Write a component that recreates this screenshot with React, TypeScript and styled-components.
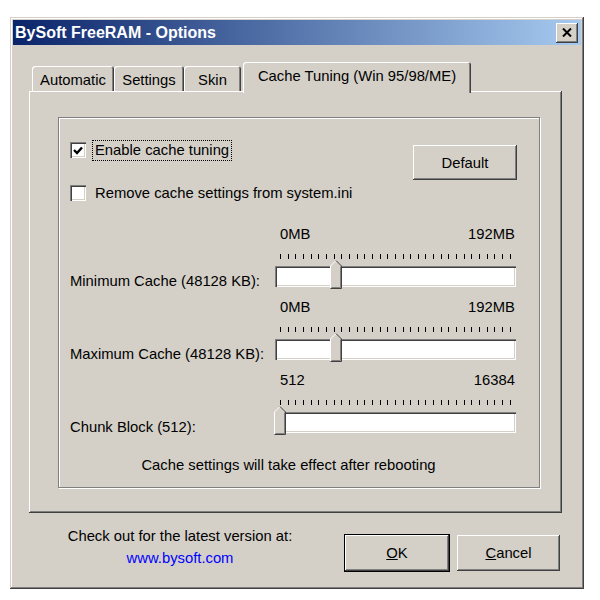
import React from 'react'
import styled, { createGlobalStyle } from 'styled-components'

const GlobalStyle = createGlobalStyle`
  html, body {
    margin: 0;
    padding: 0;
    background: #ffffff;
  }
  body {
    font-family: "Liberation Sans", Arial, sans-serif;
    font-size: 14.8px;
    color: #000000;
  }
`

const sliders = [
  { label: 'Minimum Cache (48128 KB):', min: '0MB', max: '192MB', value: 48128 / 196608 },
  { label: 'Maximum Cache (48128 KB):', min: '0MB', max: '192MB', value: 48128 / 196608 },
  { label: 'Chunk Block (512):', min: '512', max: '16384', value: 0 },
]

const TICKS = 31

const App = () => {
  return (
    <>
      <GlobalStyle />
      <Window>
        <TitleBar>
          <Title>BySoft FreeRAM - Options</Title>
          <CloseButton>
            <svg width="10" height="9" viewBox="0 0 10 9">
              <path d="M1 0.5 L9 8.5 M9 0.5 L1 8.5" stroke="#000" strokeWidth="2" />
            </svg>
          </CloseButton>
        </TitleBar>

        <Body>
          <TabStrip>
            <Tab $w={82}>Automatic</Tab>
            <Tab $w={70}>Settings</Tab>
            <Tab $w={57}>Skin</Tab>
            <Tab $w={228} $active>Cache Tuning (Win 95/98/ME)</Tab>
          </TabStrip>

          <Panel>
            <GroupBox>
              <TopSection>
                <Checks>
                  <CheckRow>
                    <CheckBox>
                      <svg width="10" height="9" viewBox="0 0 10 9">
                        <path d="M1 4 L4 7 L9 1.5" stroke="#000" strokeWidth="2.4" fill="none" />
                      </svg>
                    </CheckBox>
                    <CheckLabel $focus>Enable cache tuning</CheckLabel>
                  </CheckRow>
                  <CheckRow>
                    <CheckBox />
                    <CheckLabel>Remove cache settings from system.ini</CheckLabel>
                  </CheckRow>
                </Checks>
                <DefaultButton>Default</DefaultButton>
              </TopSection>

              {sliders.map((s) => (
                <SliderBlock key={s.label}>
                  <SliderLabel>{s.label}</SliderLabel>
                  <SliderCol>
                    <ScaleRow>
                      <span>{s.min}</span>
                      <span>{s.max}</span>
                    </ScaleRow>
                    <Ticks>
                      {Array.from({ length: TICKS }).map((_, i) => (
                        <Tick key={i} />
                      ))}
                    </Ticks>
                    <Track>
                      <Thumb style={{ left: 5 + s.value * 229 - 6 }}>
                        <svg width="12" height="29" viewBox="0 0 12 29">
                          <polygon points="0.5,6 6,0.5 11.5,6 11.5,28.5 0.5,28.5" fill="#d4d0c8" />
                          <polyline points="0.5,28 0.5,6 6,0.5" fill="none" stroke="#ffffff" />
                          <polyline points="6,0.5 11.5,6 11.5,28.5 0.5,28.5" fill="none" stroke="#404040" />
                          <polyline points="10.5,6.5 10.5,27.5 1.5,27.5" fill="none" stroke="#808080" />
                        </svg>
                      </Thumb>
                    </Track>
                  </SliderCol>
                </SliderBlock>
              ))}

              <Note>Cache settings will take effect after rebooting</Note>
            </GroupBox>
          </Panel>

          <Footer>
            <Info>
              <div>Check out for the latest version at:</div>
              <SiteLink>www.bysoft.com</SiteLink>
            </Info>
            <Buttons>
              <Button $default $w={106}>
                <u>O</u>K
              </Button>
              <Button $w={105}>
                <u>C</u>ancel
              </Button>
            </Buttons>
          </Footer>
        </Body>
      </Window>
    </>
  )
}

export default App

const raised = `
  box-shadow: inset -1px -1px #404040, inset 1px 1px #ffffff,
    inset -2px -2px #808080, inset 2px 2px #d4d0c8;
`

const Window = styled.div`
  width: 574px;
  height: 572px;
  margin: 17px 0 0 10px;
  box-sizing: border-box;
  padding: 3px;
  background: #d4d0c8;
  box-shadow: inset -1px -1px #404040, inset 1px 1px #d4d0c8,
    inset -2px -2px #808080, inset 2px 2px #ffffff;
  display: flex;
  flex-direction: column;
`

const TitleBar = styled.div`
  height: 25px;
  padding: 0 3px 0 2px;
  display: flex;
  align-items: center;
  justify-content: space-between;
  background: linear-gradient(to right, #0a246a, #a6caf0);
`

const Title = styled.div`
  color: #ffffff;
  font-weight: bold;
  font-size: 16px;
`

const CloseButton = styled.div`
  width: 22px;
  height: 20px;
  background: #d4d0c8;
  ${raised}
  display: flex;
  align-items: center;
  justify-content: center;
`

const Body = styled.div`
  flex: 1;
  padding: 17px 19px 0 16px;
  display: flex;
  flex-direction: column;
`

const TabStrip = styled.div`
  height: 29px;
  padding-left: 3px;
  display: flex;
  align-items: flex-end;
`

const Tab = styled.div<{ $w: number; $active?: boolean }>`
  position: relative;
  z-index: ${(p) => (p.$active ? 2 : 0)};
  width: ${(p) => p.$w}px;
  height: ${(p) => (p.$active ? 31 : 25)}px;
  margin-left: ${(p) => (p.$active ? 2 : 0)}px;
  margin-bottom: ${(p) => (p.$active ? -2 : 0)}px;
  padding-top: ${(p) => (p.$active ? 0 : 2)}px;
  padding-bottom: ${(p) => (p.$active ? 3 : 0)}px;
  box-sizing: border-box;
  display: flex;
  align-items: center;
  justify-content: center;
  background: #d4d0c8;
  border-top-left-radius: 3px;
  border-top-right-radius: 3px;
  box-shadow: inset 1px 1px #ffffff, inset -1px 0 #404040, inset -2px 0 #808080;
  white-space: nowrap;
`

const Panel = styled.div`
  position: relative;
  z-index: 1;
  height: 422px;
  box-sizing: border-box;
  padding: 26px 22px 25px 29px;
  background: #d4d0c8;
  box-shadow: inset -1px -1px #404040, inset 1px 1px #ffffff,
    inset -2px -2px #808080;
  display: flex;
`

const GroupBox = styled.div`
  flex: 1;
  border: 1px solid #808080;
  box-shadow: 1px 1px 0 #ffffff, inset 1px 1px 0 #ffffff;
  padding: 22px 22px 0 11px;
  display: flex;
  flex-direction: column;
`

const TopSection = styled.div`
  display: flex;
  justify-content: space-between;
  align-items: flex-start;
`

const Checks = styled.div`
  display: flex;
  flex-direction: column;
  gap: 23px;
`

const CheckRow = styled.div`
  height: 20px;
  display: flex;
  align-items: center;
  gap: 6px;
`

const CheckBox = styled.div`
  width: 16px;
  height: 16px;
  box-sizing: border-box;
  background: #ffffff;
  box-shadow: inset 1px 1px #808080, inset 2px 2px #404040,
    inset -1px -1px #ffffff, inset -2px -2px #d4d0c8;
  display: flex;
  align-items: center;
  justify-content: center;
`

const CheckLabel = styled.div<{ $focus?: boolean }>`
  border: 1px dotted ${(p) => (p.$focus ? '#000000' : 'transparent')};
  padding: 0 2px;
  line-height: 19px;
  white-space: nowrap;
`

const DefaultButton = styled.div`
  width: 104px;
  height: 35px;
  margin-top: 5px;
  background: #d4d0c8;
  ${raised}
  display: flex;
  align-items: center;
  justify-content: center;
`

const SliderBlock = styled.div`
  display: flex;
  align-items: flex-end;
  margin-top: 23px;
  & + & {
    margin-top: 12px;
  }
`

const SliderLabel = styled.div`
  width: 205px;
  line-height: 17px;
  margin-bottom: -3px;
  white-space: nowrap;
`

const SliderCol = styled.div`
  width: 241px;
  display: flex;
  flex-direction: column;
`

const ScaleRow = styled.div`
  height: 17px;
  line-height: 17px;
  padding: 0 1px 0 5px;
  display: flex;
  justify-content: space-between;
`

const Ticks = styled.div`
  width: 231px;
  height: 5px;
  margin: 11px 0 0 5px;
  display: flex;
  justify-content: space-between;
`

const Tick = styled.div`
  width: 1px;
  height: 5px;
  background: #000000;
`

const Track = styled.div`
  position: relative;
  height: 21px;
  margin-top: 7px;
  background: #ffffff;
  box-shadow: inset 1px 1px #808080, inset 2px 2px #404040,
    inset -1px -1px #ffffff, inset -2px -2px #d4d0c8;
`

const Thumb = styled.div`
  position: absolute;
  top: -6px;
  width: 12px;
  height: 29px;
  svg {
    display: block;
  }
`

const Note = styled.div`
  margin-top: 24px;
  padding-right: 10px;
  text-align: center;
  line-height: 17px;
`

const Footer = styled.div`
  display: flex;
  align-items: flex-start;
`

const Info = styled.div`
  width: 302px;
  margin-top: 12px;
  text-align: center;
  line-height: 22px;
`

const SiteLink = styled.div`
  color: #0000ff;
`

const Buttons = styled.div`
  margin: 21px 0 0 13px;
  display: flex;
  gap: 6px;
`

const Button = styled.div<{ $w: number; $default?: boolean }>`
  width: ${(p) => p.$w}px;
  height: 38px;
  box-sizing: border-box;
  background: #d4d0c8;
  border: 1px solid ${(p) => (p.$default ? '#000000' : 'transparent')};
  ${raised}
  display: flex;
  align-items: center;
  justify-content: center;
  u {
    text-decoration: underline;
  }
`
